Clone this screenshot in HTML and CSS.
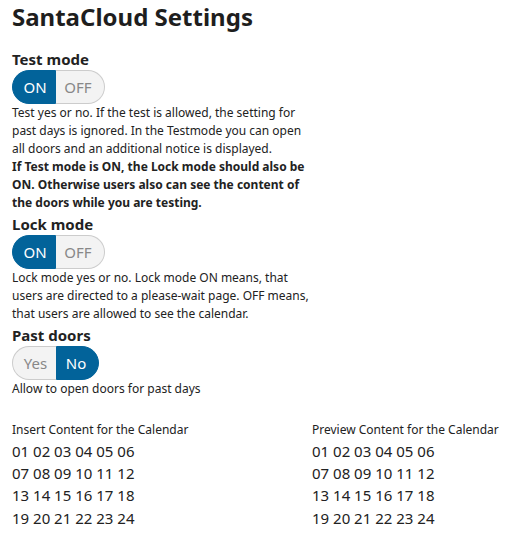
FILE: index.html
```html
<!DOCTYPE html>
<html>
<head>
<meta charset="utf-8">
<link rel="stylesheet" href="styles.css">
</head>
<body>
<div class="page">
  <h1 class="title">SantaCloud Settings</h1>

  <section class="setting first">
    <h2 class="label">Test mode</h2>
    <div class="toggle">
      <span class="seg seg-on active">ON</span><span class="seg seg-off">OFF</span>
    </div>
    <p class="desc">Test yes or no. If the test is allowed, the setting for past days is ignored. In the Testmode you can open all doors and an additional notice is displayed.<br><strong>If Test mode is ON, the Lock mode should also be ON. Otherwise users also can see the content of the doors while you are testing.</strong></p>
  </section>

  <section class="setting">
    <h2 class="label">Lock mode</h2>
    <div class="toggle">
      <span class="seg seg-on active">ON</span><span class="seg seg-off">OFF</span>
    </div>
    <p class="desc">Lock mode yes or no. Lock mode ON means, that users are directed to a please-wait page. OFF means, that users are allowed to see the calendar.</p>
  </section>

  <section class="setting">
    <h2 class="label">Past doors</h2>
    <div class="toggle">
      <span class="seg seg-yes">Yes</span><span class="seg seg-no active">No</span>
    </div>
    <p class="desc">Allow to open doors for past days</p>
  </section>

  <div class="calendars">
    <div class="cal">
      <div class="cal-title">Insert Content for the Calendar</div>
      <div class="cal-row">01 02 03 04 05 06</div>
      <div class="cal-row">07 08 09 10 11 12</div>
      <div class="cal-row">13 14 15 16 17 18</div>
      <div class="cal-row">19 20 21 22 23 24</div>
    </div>
    <div class="cal">
      <div class="cal-title">Preview Content for the Calendar</div>
      <div class="cal-row">01 02 03 04 05 06</div>
      <div class="cal-row">07 08 09 10 11 12</div>
      <div class="cal-row">13 14 15 16 17 18</div>
      <div class="cal-row">19 20 21 22 23 24</div>
    </div>
  </div>
</div>
</body>
</html>
```
FILE: styles.css
```css
html, body {
  margin: 0;
  padding: 0;
  background: #ffffff;
}
body {
  font-family: "Noto Sans", "Open Sans", sans-serif;
  color: #222222;
}
.page {
  padding: 0 12px;
}
.title {
  margin: 0;
  padding-top: 1px;
  font-size: 24px;
  line-height: 32px;
  font-weight: 700;
  color: #1e1e1e;
}
.setting {
  display: flex;
  flex-direction: column;
  align-items: flex-start;
  margin-top: 2px;
}
.setting.first {
  margin-top: 16px;
}
.label {
  margin: 0;
  font-size: 15px;
  line-height: 20px;
  font-weight: 700;
  color: #222;
}
.toggle {
  display: flex;
  height: 34px;
  margin-top: 1px;
}
.seg {
  display: flex;
  align-items: center;
  justify-content: center;
  box-sizing: border-box;
  height: 34px;
  font-size: 15px;
  color: #888;
  background: #f3f3f3;
  border: 1px solid #cccccc;
}
.seg.active {
  background: #02639a;
  border-color: #02639a;
  color: #ffffff;
}
.seg-on { width: 44px; border-radius: 17px 0 0 17px; padding-left: 2px; }
.seg-off { width: 49px; border-radius: 0 17px 17px 0; border-left: none; padding-right: 4px; }
.seg-yes { width: 44px; border-radius: 17px 0 0 17px; border-right: none; padding-left: 2px; }
.seg-no { width: 43px; border-radius: 0 17px 17px 0; padding-right: 3px; }
.desc {
  margin: 0;
  width: 300px;
  font-size: 12px;
  line-height: 18px;
  color: #222;
}
.desc strong {
  font-weight: 700;
}
.calendars {
  display: grid;
  grid-template-columns: 300px 1fr;
  margin-top: 23px;
}
.cal-title {
  font-size: 12px;
  line-height: 18px;
  margin-bottom: 1px;
}
.cal-row {
  font-size: 15px;
  line-height: 22.2px;
}
```
